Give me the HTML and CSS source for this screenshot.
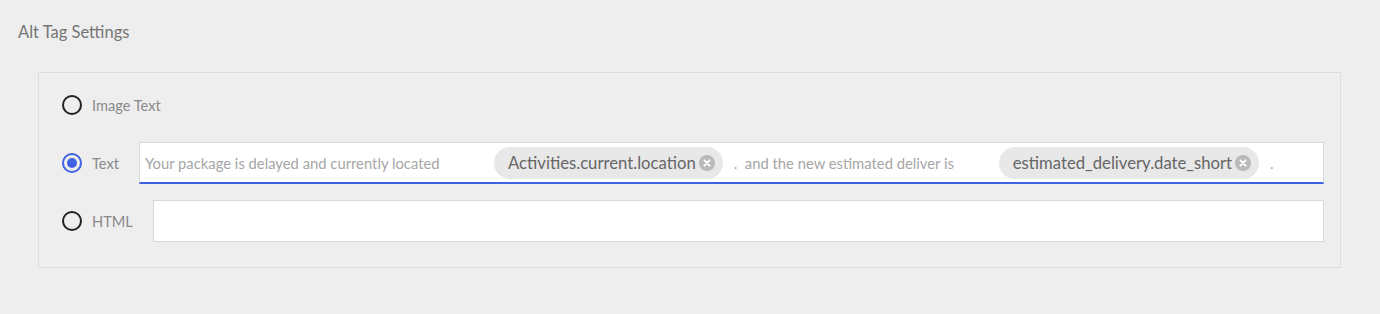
FILE: index.html
```html
<!DOCTYPE html>
<html lang="en">
<head>
  <meta charset="UTF-8">
  <meta name="viewport" content="width=device-width, initial-scale=1.0">
  <title>Alt Tag Settings</title>
  <link rel="stylesheet" href="styles.css">
</head>
<body>

  <div class="settings">
    <h2 class="settings-title">Alt Tag Settings</h2>

    <div class="settings-box">
      <label class="option">
        <span class="radio"></span>
        <span class="option-label">Image Text</span>
      </label>

      <div class="option">
        <span class="radio checked"></span>
        <span class="option-label">Text</span>
        <div class="field field-active">
          <span class="segment seg-first">Your package is delayed and currently located</span>
          <span class="chip">Activities.current.location<span class="chip-x"><svg viewBox="0 0 16 16" width="16" height="16"><circle cx="8" cy="8" r="8" fill="#b9b9b9"/><path d="M5.4 5.4 L10.6 10.6 M10.6 5.4 L5.4 10.6" stroke="#fff" stroke-width="2" stroke-linecap="round"/></svg></span></span>
          <span class="segment seg-second">. &nbsp;and the new estimated deliver is</span>
          <span class="chip">estimated_delivery.date_short<span class="chip-x"><svg viewBox="0 0 16 16" width="16" height="16"><circle cx="8" cy="8" r="8" fill="#b9b9b9"/><path d="M5.4 5.4 L10.6 10.6 M10.6 5.4 L5.4 10.6" stroke="#fff" stroke-width="2" stroke-linecap="round"/></svg></span></span>
          <span class="segment seg-last">.</span>
        </div>
      </div>

      <div class="option">
        <span class="radio"></span>
        <span class="option-label">HTML</span>
        <div class="field"></div>
      </div>
    </div>
  </div>

</body>
</html>
```

FILE: styles.css
```css
/* Global Styles */
body {
    font-family: Lato, "Open Sans", sans-serif;
    margin: 0;
    padding: 0;
    background-color: #eeeeee;
}

.settings {
    padding: 21px 39px 0 18px;
}

.settings-title {
    margin: 0 0 29px 0;
    font-size: 16.5px;
    font-weight: normal;
    color: #757575;
    line-height: 22px;
}

/* Bordered box */
.settings-box {
    margin-left: 20px;
    padding: 11px 16px 25px 23px;
    border: 1px solid #dddddd;
    display: flex;
    flex-direction: column;
    gap: 16px;
}

.option {
    display: flex;
    align-items: center;
    height: 42px;
}

.radio {
    box-sizing: border-box;
    width: 20px;
    height: 20px;
    border: 2px solid #222222;
    border-radius: 50%;
    flex-shrink: 0;
    display: flex;
    align-items: center;
    justify-content: center;
}

.radio.checked {
    border-color: #3f63e0;
}

.radio.checked::after {
    content: "";
    width: 10px;
    height: 10px;
    border-radius: 50%;
    background-color: #3f63e0;
}

.option-label {
    margin-left: 10px;
    margin-right: 20px;
    font-size: 14.6px;
    color: #8a8a8a;
}

/* Inputs */
.field {
    flex: 1;
    align-self: stretch;
    box-sizing: border-box;
    background-color: #ffffff;
    border: 1px solid #dadada;
    display: flex;
    align-items: center;
}

.field-active {
    border-bottom: 2px solid #3f63e0;
    padding-left: 5px;
}

.segment {
    font-size: 14.8px;
    color: #a6a6a6;
    white-space: nowrap;
}

.seg-first {
    width: 349px;
}

.seg-second {
    width: 265px;
    margin-left: 11px;
}

.seg-last {
    margin-left: 11px;
}

.chip {
    display: flex;
    align-items: center;
    height: 32px;
    padding: 0 8px 0 14px;
    border-radius: 16px;
    background-color: #e8e8e8;
    color: #666666;
    font-size: 16.7px;
    white-space: nowrap;
}

.chip-x {
    display: flex;
    margin-left: 3px;
}
```
